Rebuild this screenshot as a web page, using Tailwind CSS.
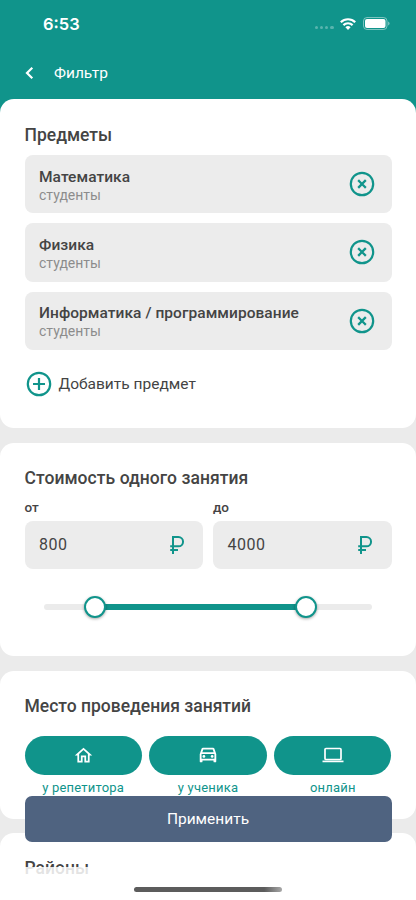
<!DOCTYPE html>
<html lang="ru">
<head>
<meta charset="utf-8">
<title>Фильтр</title>
<script src="https://cdn.jsdelivr.net/npm/@tailwindcss/browser@4"></script>
</head>
<body class="relative h-[900px] w-[416px] overflow-hidden bg-[#ebebeb] font-['Roboto',sans-serif] text-[#444444]">
<svg class="hidden">
  <symbol id="remove" viewBox="0 0 26 26"><circle cx="13" cy="13" r="11.2" fill="none" stroke="currentColor" stroke-width="2.2"/><path d="M10 10l6 6M16 10l-6 6" stroke="currentColor" stroke-width="2.3" stroke-linecap="square"/></symbol>
  <symbol id="ruble" viewBox="0 0 16 20"><path d="M4 19V2h5.4a4.65 4.65 0 0 1 0 9.3H1.2M1.2 15h7.8" fill="none" stroke="currentColor" stroke-width="2"/></symbol>
</svg>
<header class="h-[130px] bg-[#10948b] text-white">
  <div class="flex h-[47px] items-center pl-[43px] pr-[26.5px]">
    <span class="flex-1 font-['Inter'] text-[16.5px] leading-[20px] font-semibold">6:53</span>
    <div class="mt-[8px] flex gap-[2px] opacity-30">
      <i class="size-[3.2px] rounded-full bg-white"></i><i class="size-[3.2px] rounded-full bg-white"></i><i class="size-[3.2px] rounded-full bg-white"></i><i class="size-[3.2px] rounded-full bg-white"></i>
    </div>
    <svg class="ml-[6px] h-[12px] w-[16px]" viewBox="0 0 16 12" fill="none" stroke="white" stroke-width="2.2"><path d="M.8 4.2a10.3 10.3 0 0 1 14.4 0"/><path d="M3.4 7.1a6.6 6.6 0 0 1 9.2 0"/><path d="M5.4 9.3a3.8 3.8 0 0 1 5.2 0L8 12z" fill="white" stroke="none"/></svg>
    <svg class="ml-[7px] h-[13px] w-[27px]" viewBox="0 0 27 13"><rect x=".5" y=".5" width="23.5" height="12" rx="3.5" fill="none" stroke="white" stroke-opacity=".45"/><rect x="2" y="2" width="20.5" height="9" rx="2" fill="white"/><path d="M25.2 4.5v4q1.3-.6 1.3-2t-1.3-2" fill="white" fill-opacity=".5"/></svg>
  </div>
  <div class="flex h-[52px] items-center pl-[25px]">
    <svg class="h-[14px] w-[9px]" viewBox="0 0 9 14"><path d="M7.3 1.8L2 7l5.3 5.2" fill="none" stroke="white" stroke-width="2.2"/></svg>
    <h1 class="ml-[20px] pt-[2px] text-[15.5px]">Фильтр</h1>
  </div>
</header>
<main class="relative -mt-[31px] flex flex-col gap-[14.5px]">
  <section class="h-[329px] rounded-[14px] bg-white px-[24.5px] pt-[25px]">
    <h2 class="text-[17.5px] leading-[22px] font-medium">Предметы</h2>
    <div class="mt-[8.5px] flex flex-col gap-[10px]">
      <div class="flex h-[58.5px] items-center rounded-[8px] bg-[#ececec] pr-[16.5px] pl-[14.5px]"><div class="flex-1 pt-[4px]"><p class="text-[15.5px] leading-[18px] font-medium tracking-[0.05px]">Математика</p><p class="text-[14px] leading-[18px] text-[#8c8c8c]">студенты</p></div><svg class="size-[26px] text-[#10948b]"><use href="#remove"/></svg></div>
      <div class="flex h-[58.5px] items-center rounded-[8px] bg-[#ececec] pr-[16.5px] pl-[14.5px]"><div class="flex-1 pt-[3px]"><p class="text-[15.5px] leading-[18px] font-medium tracking-[0.05px]">Физика</p><p class="text-[14px] leading-[18px] text-[#8c8c8c]">студенты</p></div><svg class="size-[26px] text-[#10948b]"><use href="#remove"/></svg></div>
      <div class="flex h-[58.5px] items-center rounded-[8px] bg-[#ececec] pr-[16.5px] pl-[14.5px]"><div class="flex-1 pt-[3px]"><p class="text-[15.5px] leading-[18px] font-medium tracking-[0.05px]">Информатика / программирование</p><p class="text-[14px] leading-[18px] text-[#8c8c8c]">студенты</p></div><svg class="size-[26px] text-[#10948b]"><use href="#remove"/></svg></div>
    </div>
    <div class="mt-[21px] ml-[1.5px] flex items-center gap-[6.5px]">
      <svg class="size-[26px] text-[#10948b]" viewBox="0 0 26 26" fill="none" stroke="currentColor" stroke-width="2.2"><circle cx="13" cy="13" r="11.2"/><path d="M13 7v12M7 13h12"/></svg>
      <span class="pt-[1px] text-[15.5px]">Добавить предмет</span>
    </div>
  </section>
  <section class="h-[213.5px] rounded-[14px] bg-white px-[24.5px] pt-[24px]">
    <h2 class="text-[17.5px] leading-[22px] font-medium tracking-[0.05px]">Стоимость одного занятия</h2>
    <div class="mt-[10px] flex gap-[10px]">
      <div class="flex-1"><p class="text-[13.5px] leading-[16px] font-medium">от</p><div class="mt-[6px] flex h-[48px] items-center justify-between rounded-[8px] bg-[#ececec] pr-[18.5px] pl-[14.5px]"><span class="text-[16px] tracking-[0.5px]">800</span><svg class="h-[20px] w-[16px] text-[#10948b]"><use href="#ruble"/></svg></div></div>
      <div class="flex-1"><p class="text-[13.5px] leading-[16px] font-medium">до</p><div class="mt-[6px] flex h-[48px] items-center justify-between rounded-[8px] bg-[#ececec] pr-[18.5px] pl-[14.5px]"><span class="text-[16px] tracking-[0.5px]">4000</span><svg class="h-[20px] w-[16px] text-[#10948b]"><use href="#ruble"/></svg></div></div>
    </div>
    <div class="mx-[19.5px] mt-[27.5px] flex h-[22px] items-center">
      <div class="h-[6px] w-[40px] rounded-l-full bg-[#ebebeb]"></div>
      <div class="z-1 -mr-px size-[22px] rounded-full border-[2.5px] border-[#10948b] bg-white shadow-[0_1px_3px_rgba(0,0,0,0.35)]"></div>
      <div class="h-[6px] flex-1 bg-[#10948b]"></div>
      <div class="z-1 -ml-px size-[22px] rounded-full border-[2.5px] border-[#10948b] bg-white shadow-[0_1px_3px_rgba(0,0,0,0.35)]"></div>
      <div class="h-[6px] w-[55px] rounded-r-full bg-[#ebebeb]"></div>
    </div>
  </section>
  <section class="h-[148px] rounded-[14px] bg-white px-[24.5px] pt-[24px]">
    <h2 class="text-[17.5px] leading-[22px] font-medium">Место проведения занятий</h2>
    <div class="mt-[19px] flex gap-[7.5px] text-center text-[13px] leading-[16px] tracking-[0.2px] text-[#10948b]">
      <div class="flex-1"><div class="flex h-[39px] items-center justify-center rounded-full bg-[#10948b]"><svg class="size-[21px]" viewBox="0 0 24 24" fill="white"><path d="M12 5.69l5 4.5V18h-2v-6H9v6H7v-7.81l5-4.5M12 3L2 12h3v8h6v-6h2v6h6v-8h3L12 3z"/></svg></div><p class="mt-[5px]">у репетитора</p></div>
      <div class="flex-1"><div class="flex h-[39px] items-center justify-center rounded-full bg-[#10948b]"><svg class="size-[22px]" viewBox="0 0 24 24" fill="white"><path d="M18.92 5.01C18.72 4.42 18.16 4 17.5 4h-11c-.66 0-1.21.42-1.42 1.01L3 11v8c0 .55.45 1 1 1h1c.55 0 1-.45 1-1v-1h12v1c0 .55.45 1 1 1h1c.55 0 1-.45 1-1v-8l-2.08-5.99zM6.85 6h10.29l1.04 3H5.81l1.04-3zM19 16H5v-5h14v5z"/><circle cx="7.5" cy="13.5" r="1.5"/><circle cx="16.5" cy="13.5" r="1.5"/></svg></div><p class="mt-[5px]">у ученика</p></div>
      <div class="flex-1"><div class="flex h-[39px] items-center justify-center rounded-full bg-[#10948b]"><svg class="h-[16px] w-[22px]" viewBox="0 0 22 16" fill="none" stroke="white" stroke-width="1.7"><rect x="3" y="1.5" width="16" height="11" rx="1"/><path d="M.5 14.4h21"/></svg></div><p class="mt-[5px]">онлайн</p></div>
    </div>
  </section>
  <section class="h-[67px] rounded-t-[14px] bg-white px-[24.5px] pt-[24px]">
    <h2 class="text-[17.5px] leading-[22px] font-medium">Районы</h2>
  </section>
</main>
<div class="absolute inset-x-0 bottom-0 h-[33px] bg-white/85"></div>
<button class="absolute top-[796px] left-[24.5px] h-[46px] w-[367px] rounded-[7px] bg-[#4f6380] pt-[1px] text-[15.5px] text-white">Применить</button>
<div class="absolute top-[887px] left-[134px] h-[5px] w-[148px] rounded-full bg-linear-to-r from-[#5c5c5c] from-88% to-[#a8a8a8]"></div>
</body>
</html>
